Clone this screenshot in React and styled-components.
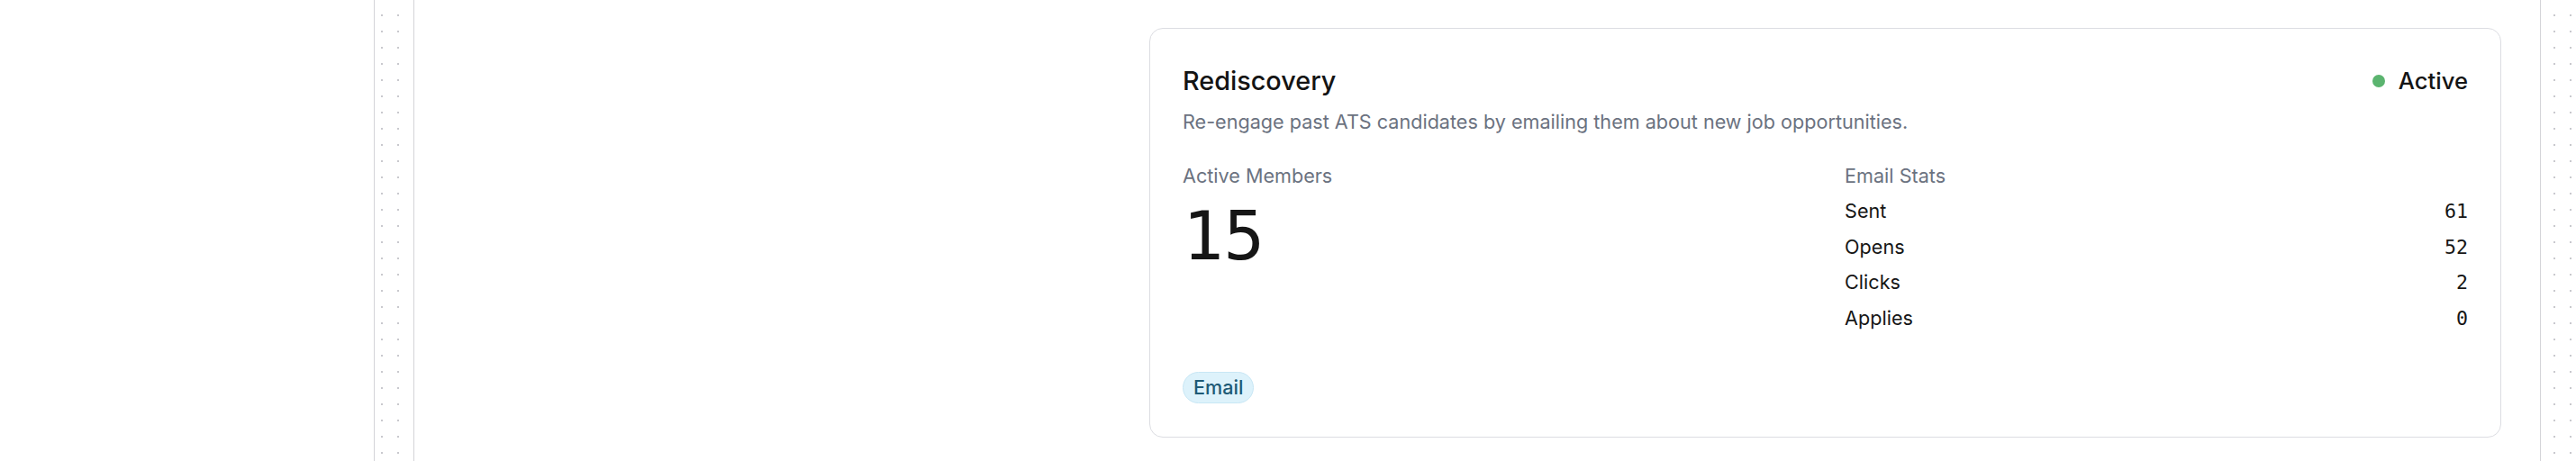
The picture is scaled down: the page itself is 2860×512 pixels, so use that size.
import React from 'react'
import styled, { createGlobalStyle } from 'styled-components'

const GlobalStyle = createGlobalStyle`
  html, body {
    margin: 0;
    padding: 0;
    background: #ffffff;
  }
  body {
    font-family: Inter, "Noto Sans", "Liberation Sans", sans-serif;
    color: #18181b;
  }
`

const Page = styled.div`
  display: flex;
  min-height: 512px;
  width: 2860px;
  overflow: hidden;
`

const Blank = styled.div`
  width: 415px;
  flex: none;
`

// dotted gutter, the dots line up across the page
const Gutter = styled.div`
  flex: none;
  width: ${p => p.$width}px;
  box-sizing: border-box;
  border-left: 1px solid #d4d4d8;
  border-right: ${p => (p.$closed ? '1px solid #d4d4d8' : 'none')};
  background-image: radial-gradient(circle, #c9c9ce 1px, transparent 1.3px);
  background-size: 18px 18px;
  background-position: 1px 8px;
  background-attachment: fixed;
`

const Main = styled.main`
  flex: 1;
  display: grid;
  grid-template-columns: 1fr 1501px;
  align-items: start;
  padding: 31px 43px 0 43px;
`

const Card = styled.section`
  grid-column: 2;
  box-sizing: border-box;
  border: 1px solid #dcdde2;
  border-radius: 15px;
  padding: 40px 36px 37px 36px;
  background: #fff;
`

const Header = styled.div`
  display: flex;
  align-items: center;
  justify-content: space-between;
  height: 36px;
`

const Title = styled.h2`
  margin: 0;
  font-size: 28.8px;
  line-height: 36px;
  font-weight: 500;
  color: #141414;
`

const Status = styled.div`
  display: flex;
  align-items: center;
  gap: 15px;
  font-size: 25.6px;
  line-height: 36px;
  font-weight: 500;
  color: #141414;
`

const Dot = styled.span`
  width: 14px;
  height: 14px;
  border-radius: 50%;
  background: ${p => p.$color};
`

const Description = styled.p`
  margin: 10.5px 0 0 0;
  font-size: 21.6px;
  line-height: 32.4px;
  color: #6b7280;
`

const Stats = styled.div`
  display: grid;
  grid-template-columns: 1fr 1fr;
  column-gap: 43.2px;
  margin-top: 29.8px;
`

const Label = styled.div`
  font-size: 21.6px;
  line-height: 28.8px;
  color: #6b7280;
`

const BigNumber = styled.div`
  margin-top: 14.6px;
  font-family: "DejaVu Sans Mono", "Liberation Mono", monospace;
  font-size: 75.6px;
  line-height: 76px;
  color: #161616;
`

const StatList = styled.div`
  display: flex;
  flex-direction: column;
  margin-top: 5.6px;
`

const StatRow = styled.div`
  display: flex;
  align-items: baseline;
  justify-content: space-between;
  height: 39.5px;
  line-height: 39.5px;
  font-size: 21.6px;
  color: #161616;
`

const StatValue = styled.span`
  font-family: "DejaVu Sans Mono", "Liberation Mono", monospace;
  font-size: 21.6px;
`

const Tags = styled.div`
  display: flex;
  gap: 8px;
  margin-top: 39.9px;
`

const Tag = styled.span`
  display: inline-block;
  padding: 2px 11px;
  border: 1px solid #c8e7f5;
  border-radius: 999px;
  background: #ddf2fb;
  color: #1e5a76;
  font-size: 21.6px;
  line-height: 28.8px;
  font-weight: 500;
`

const emailStats = [
  { label: 'Sent', value: 61 },
  { label: 'Opens', value: 52 },
  { label: 'Clicks', value: 2 },
  { label: 'Applies', value: 0 },
]

export default function App() {
  return (
    <>
      <GlobalStyle />
      <Page>
        <Blank />
        <Gutter $width={45} $closed />
        <Main>
          <Card>
            <Header>
              <Title>Rediscovery</Title>
              <Status>
                <Dot $color="#5bb46f" />
                Active
              </Status>
            </Header>
            <Description>
              Re-engage past ATS candidates by emailing them about new job opportunities.
            </Description>
            <Stats>
              <div>
                <Label>Active Members</Label>
                <BigNumber>15</BigNumber>
              </div>
              <div>
                <Label>Email Stats</Label>
                <StatList>
                  {emailStats.map(s => (
                    <StatRow key={s.label}>
                      <span>{s.label}</span>
                      <StatValue>{s.value}</StatValue>
                    </StatRow>
                  ))}
                </StatList>
              </div>
            </Stats>
            <Tags>
              <Tag>Email</Tag>
            </Tags>
          </Card>
        </Main>
        <Gutter $width={40} />
      </Page>
    </>
  )
}
